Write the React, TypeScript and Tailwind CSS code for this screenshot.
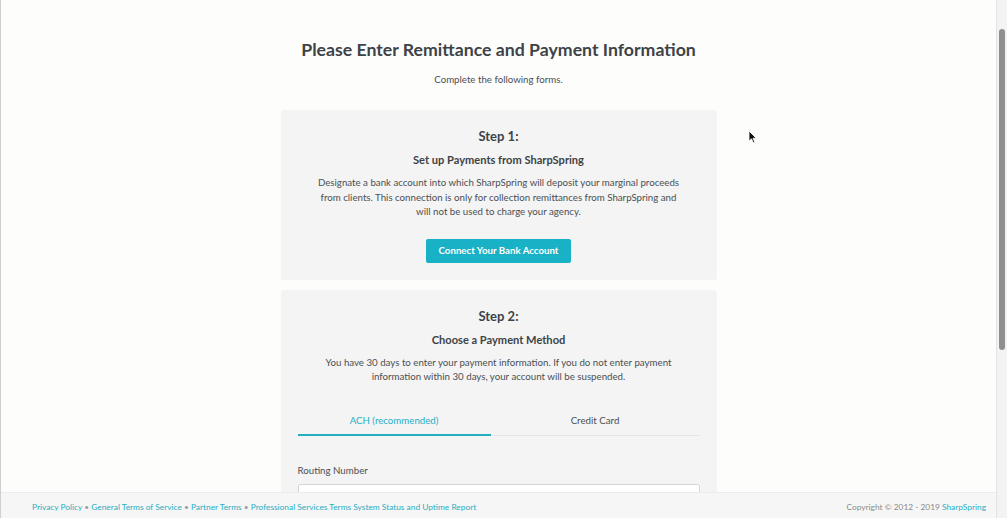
import React from "react";

const TEAL = "text-[#1fafc4]";

const footerLinks = ["Privacy Policy", "General Terms of Service", "Partner Terms", "Professional Services Terms"];

function StepCard({ step, title, children }: { step: string; title: string; children: React.ReactNode }) {
  return (
    <div className="rounded-[3px] bg-[#f4f4f4] px-[17px] pt-[16px] pb-[17px] text-center">
      <h2 className="text-[13px] font-bold leading-[20px] text-[#3e4346]">{step}</h2>
      <h3 className="mt-[6px] text-[11.1px] font-bold leading-[16px] text-[#3e4346]">{title}</h3>
      {children}
    </div>
  );
}

export default function App() {
  return (
    <div className="relative flex h-[518px] w-full overflow-hidden bg-[#fdfdfc] text-[#4a4f53]" style={{ fontFamily: "Lato, 'Open Sans', sans-serif" }}>
      <div className="relative flex-1 border-l border-[#cfcfcf]">
        <main className="mx-auto w-[436px] pt-[38px]">
          <h1 className="text-center text-[17.7px] font-bold leading-[24px] text-[#3d4347]">
            Please Enter Remittance and Payment Information
          </h1>
          <p className="mt-[10px] text-center text-[9.7px] leading-[14px]">Complete the following forms.</p>

          <div className="mt-[24px] flex flex-col gap-[10px]">
            <StepCard step="Step 1:" title="Set up Payments from SharpSpring">
              <p className="mx-auto mt-[7px] max-w-[370px] text-[9.7px] leading-[14.5px]">
                Designate a bank account into which SharpSpring will deposit your marginal proceeds from clients. This connection is only for collection remittances from SharpSpring and will not be used to charge your agency.
              </p>
              <button className="mt-[20px] h-[24px] rounded-[2px] bg-[#18b1c5] px-[13px] text-[9.7px] font-bold text-white">
                Connect Your Bank Account
              </button>
            </StepCard>

            <StepCard step="Step 2:" title="Choose a Payment Method">
              <p className="mx-auto mt-[7px] max-w-[370px] text-[9.7px] leading-[14.5px]">
                You have 30 days to enter your payment information. If you do not enter payment information within 30 days, your account will be suspended.
              </p>
              <div className="mt-[28px] flex text-[9.7px] leading-[16px]">
                <div className={`w-[193px] border-b-[2px] border-[#25aec0] pb-[6px] ${TEAL}`}>ACH (recommended)</div>
                <div className="flex-1 border-b border-[#e6e6e6] pb-[7px]">Credit Card</div>
              </div>
              <div className="mt-[26px] text-left">
                <label className="block text-[9.7px] leading-[16px]">Routing Number</label>
                <input
                  placeholder="123456789"
                  className="mt-[6px] h-[30px] w-full rounded-[2px] border border-[#d6d6d6] bg-white px-[8px] text-[9.7px] placeholder:text-[#c4c4c4] outline-none"
                />
              </div>
            </StepCard>
          </div>
        </main>

        <footer className="absolute right-0 bottom-0 left-0 flex h-[26px] items-center justify-between border-t border-[#ececec] bg-[#f6f6f6] pt-[3px] pr-[10px] pl-[31px] text-[8.35px]">
          <div className={TEAL}>
            {footerLinks.map((l, i) => (
              <span key={l}>
                {l}
                {i < footerLinks.length - 1 ? <span className="text-[#9a9a9a]"> • </span> : " "}
              </span>
            ))}
            System Status and Uptime Report
          </div>
          <div className="text-[#8a8a8a]">
            Copyright © 2012 - 2019 <span className={TEAL}>SharpSpring</span>
          </div>
        </footer>

        {/* mouse pointer */}
        <svg className="absolute top-[130px] left-[747px]" width="9" height="14" viewBox="0 0 9 14">
          <path d="M1 1 L1 11 L3.5 8.8 L5.3 12.8 L6.8 12.1 L5 8.2 L8.2 8.2 Z" fill="#111" stroke="#fff" strokeWidth="0.8" />
        </svg>
      </div>

      {/* scrollbar */}
      <div className="w-[11px] border-l border-[#e2e2e2] bg-[#f3f3f3] pt-[29px]">
        <div className="mx-auto h-[321px] w-[6px] rounded-full bg-[#8f8f8f]" />
      </div>
    </div>
  );
}
